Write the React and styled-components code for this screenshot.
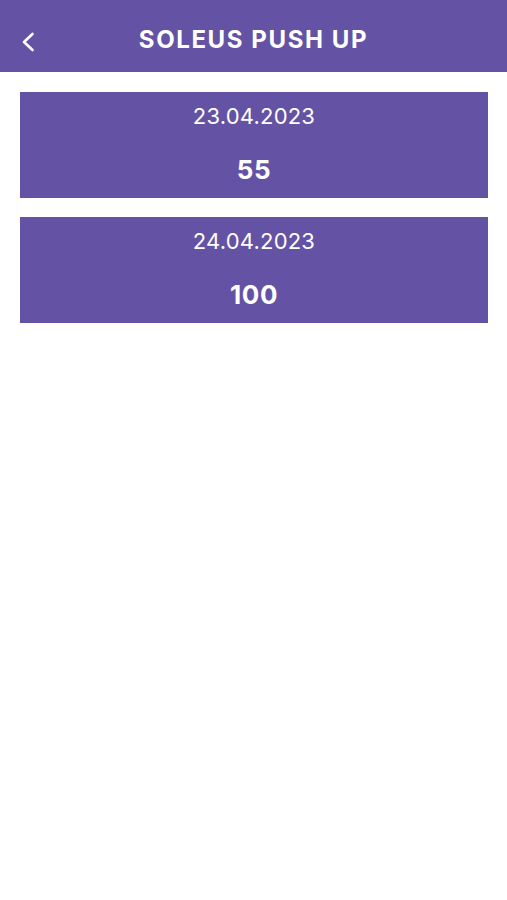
import React from 'react'
import styled, { createGlobalStyle } from 'styled-components'

const entries = [
  { date: '23.04.2023', value: 55 },
  { date: '24.04.2023', value: 100 },
]

const Global = createGlobalStyle`
  html, body {
    margin: 0;
    padding: 0;
    background: #ffffff;
    font-family: Inter, "Noto Sans", Roboto, sans-serif;
  }
`

const Page = styled.div`
  width: 100%;
  min-height: 900px;
  background: #ffffff;
`

const Header = styled.header`
  height: 72px;
  box-sizing: border-box;
  padding-top: 8px;
  background: #6452a5;
  display: grid;
  grid-template-columns: 1fr auto 1fr;
  align-items: center;
  color: #ffffff;
`

const BackButton = styled.button`
  justify-self: start;
  margin-left: 16px;
  margin-top: 4px;
  width: 24px;
  height: 24px;
  padding: 0;
  border: 0;
  background: transparent;
  display: flex;
  align-items: center;
  justify-content: center;
  cursor: pointer;
`

const Title = styled.h1`
  margin: 0;
  font-size: 24px;
  line-height: 30px;
  font-weight: 700;
  letter-spacing: 1.6px;
  color: #ffffff;
`

const List = styled.div`
  display: flex;
  flex-direction: column;
  gap: 19px;
  padding: 20px 19px 20px 20px;
`

const Card = styled.div`
  background: #6452a5;
  color: #ffffff;
  display: flex;
  flex-direction: column;
  align-items: center;
  padding: 12px 0 13px;
`

const DateText = styled.div`
  font-size: 22px;
  line-height: 24px;
  font-weight: 400;
  letter-spacing: 0.2px;
`

const Value = styled.div`
  margin-top: 27px;
  font-size: 26px;
  line-height: 30px;
  font-weight: 700;
  letter-spacing: 0.6px;
`

export default function App() {
  return (
    <Page>
      <Global />
      <Header>
        <BackButton aria-label="Back">
          <svg width="14" height="20" viewBox="0 0 14 20" fill="none">
            <polyline
              points="11.5,2 3,10 11.5,18"
              stroke="#ffffff"
              strokeWidth="2.6"
              strokeLinecap="round"
              strokeLinejoin="round"
            />
          </svg>
        </BackButton>
        <Title>SOLEUS PUSH UP</Title>
        <span />
      </Header>
      <List>
        {entries.map((e) => (
          <Card key={e.date}>
            <DateText>{e.date}</DateText>
            <Value>{e.value}</Value>
          </Card>
        ))}
      </List>
    </Page>
  )
}
